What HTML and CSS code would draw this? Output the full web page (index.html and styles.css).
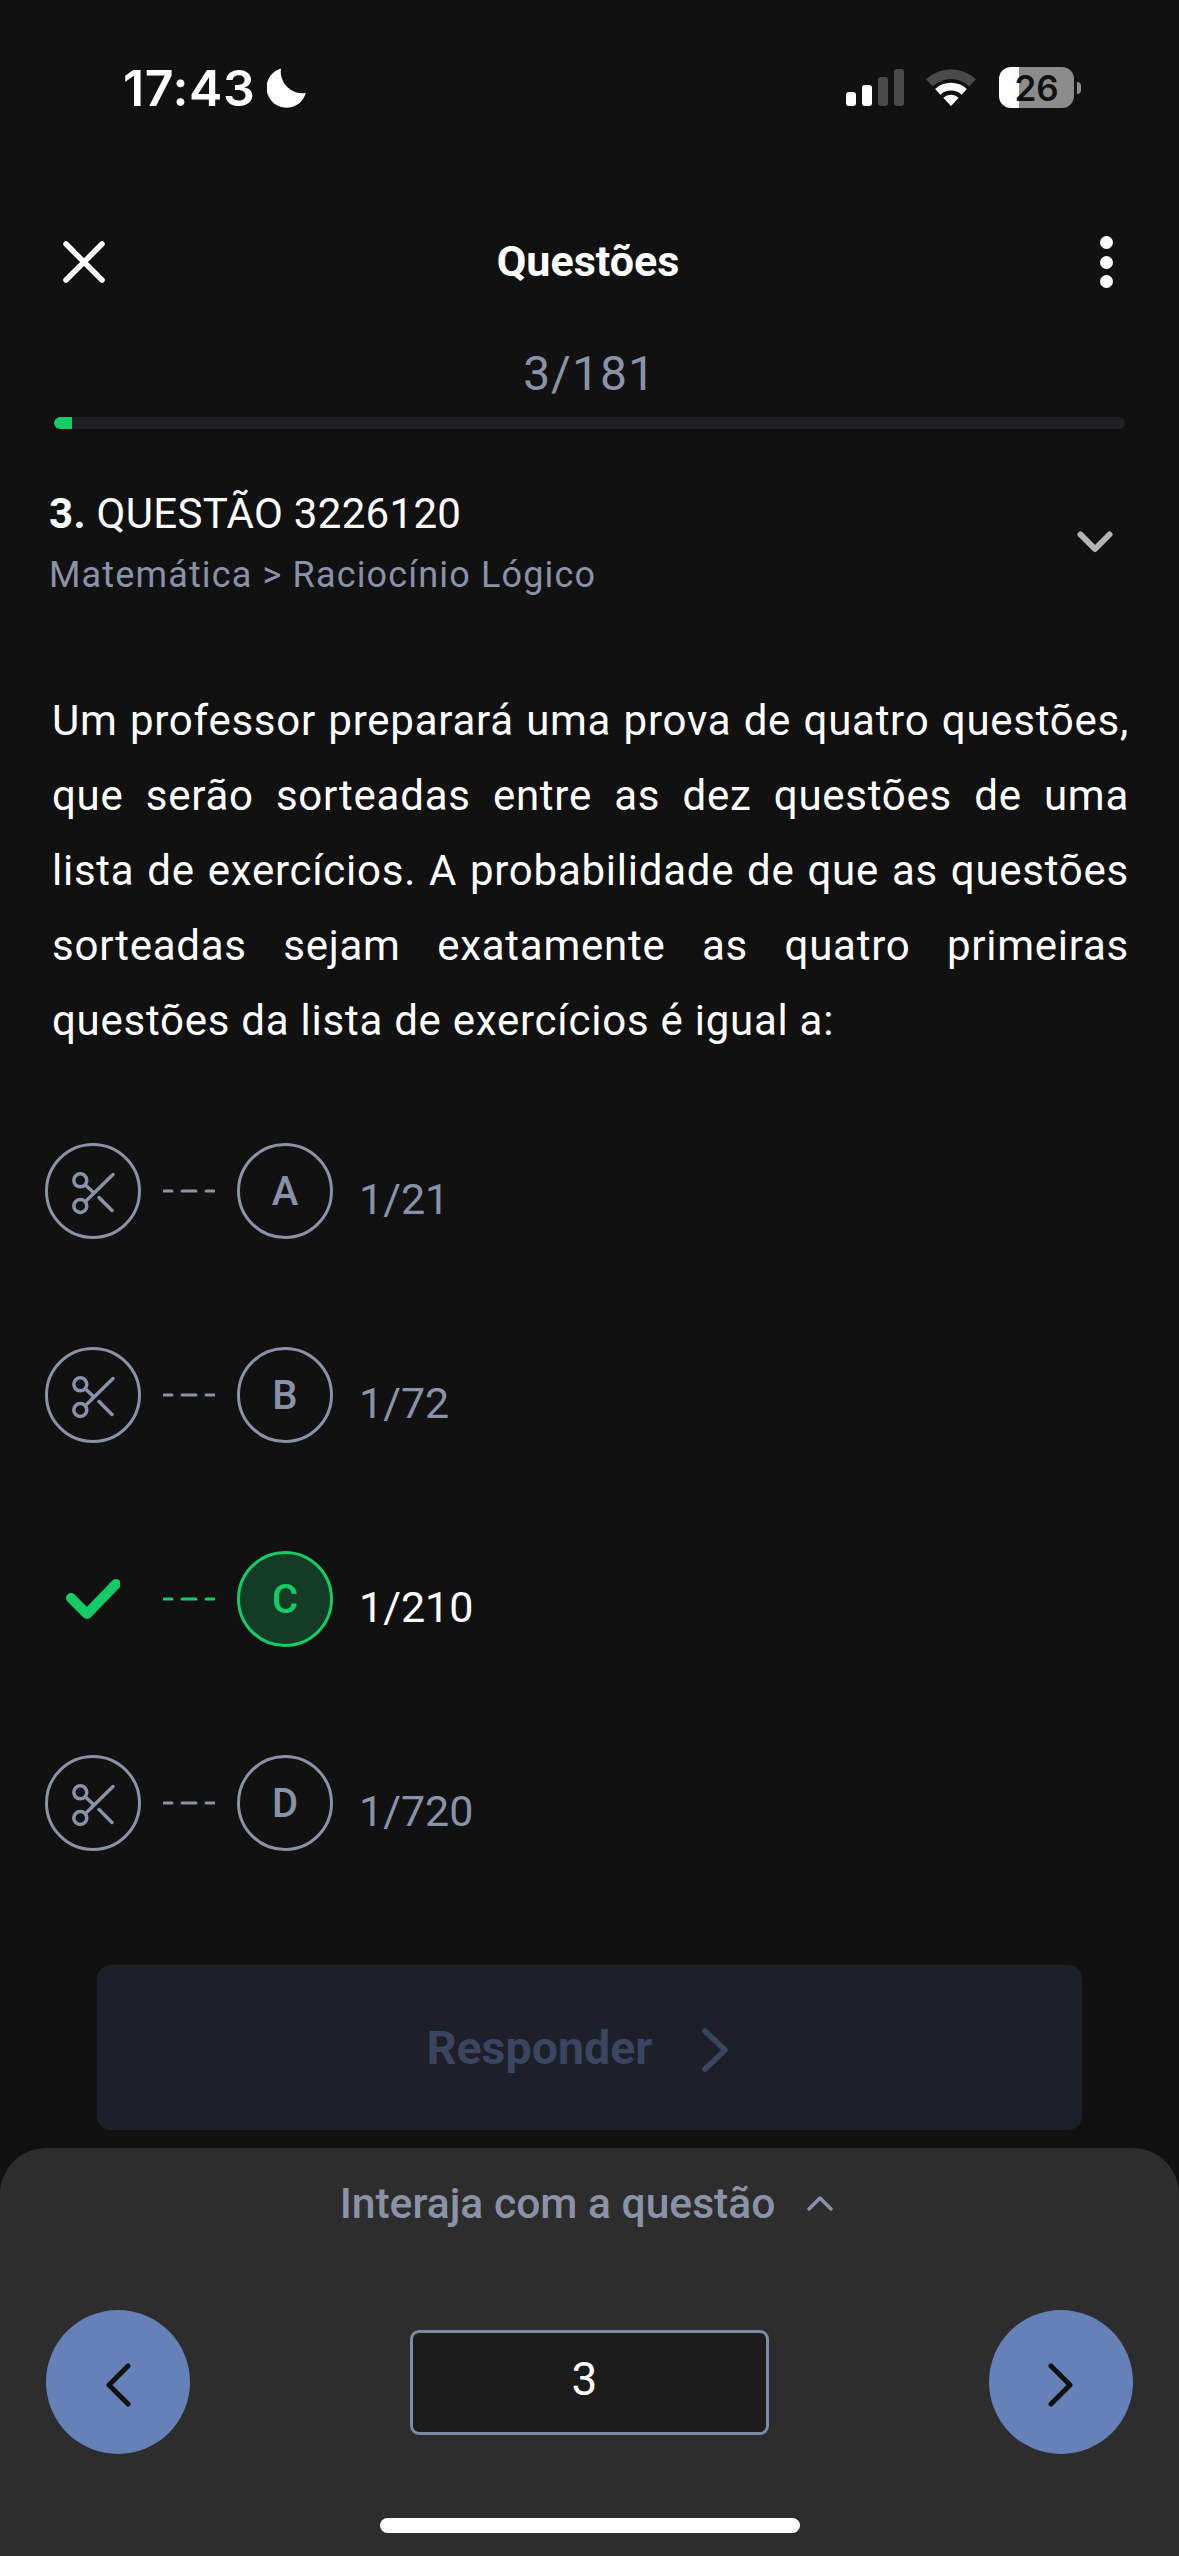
FILE: index.html
```html
<!DOCTYPE html>
<html lang="pt-BR">
<head>
<meta charset="utf-8">
<title>Questões</title>
<link rel="stylesheet" href="styles.css">
</head>
<body>
<div class="page">
  <div class="status">
    <div class="status-left">
      <span class="time">17:43</span>
      <svg class="moon" viewBox="0 0 40 40"><path d="M14 .5A20 20 0 1 0 38.8 25A21.500 21.500 0 0 1 14 .5Z" fill="#fff"/></svg>
    </div>
    <div class="status-right">
      <div class="signal"><i class="b1"></i><i class="b2"></i><i class="b3"></i><i class="b4"></i></div>
      <svg class="wifi" viewBox="0 0 50 37">
        <path d="M0 10.200A36.700 36.700 0 0 1 50 10.200L43.400 17.300A27 27 0 0 0 6.600 17.300Z" fill="#4a4a4a"/>
        <path d="M9.100 20A23.300 23.300 0 0 1 40.900 20L35.600 25.700A15.500 15.500 0 0 0 14.400 25.700Z" fill="#fff"/>
        <path d="M17.300 28.700A11.300 11.300 0 0 1 32.700 28.700L25 37Z" fill="#fff"/>
      </svg>
      <div class="battery"><span>26</span></div>
      <div class="nub"></div>
    </div>
  </div>

  <header class="topbar">
    <svg class="icon-close" viewBox="0 0 42 42"><path d="M3 3L39 39M39 3L3 39" stroke="#fff" stroke-width="5.500" stroke-linecap="round"/></svg>
    <h1 class="title">Questões</h1>
    <div class="dots"><i></i><i></i><i></i></div>
  </header>

  <div class="counter">3/181</div>
  <div class="progress"><div class="progress-fill" style="width:18px"></div></div>

  <section class="qhead">
    <div>
      <div class="qname"><b>3.</b> QUESTÃO 3226120</div>
      <div class="qsub">Matemática &gt; Raciocínio Lógico</div>
    </div>
    <svg class="qchev" viewBox="0 0 36 22"><path d="M3.500 3.500L18 18L32.500 3.500" fill="none" stroke="#b4b4b4" stroke-width="6" stroke-linecap="round" stroke-linejoin="round"/></svg>
  </section>

  <p class="statement">Um professor preparará uma prova de quatro questões, que serão sorteadas entre as dez questões de uma lista de exercícios. A probabilidade de que as questões sorteadas sejam exatamente as quatro primeiras questões da lista de exercícios é igual a:</p>

  <div class="options">
    <div class="option">
      <div class="cut"><svg viewBox="0 0 48 48"><use href="#scissors"/></svg></div>
      <svg class="dash" viewBox="0 0 52 4"><path d="M1 2H9M19 2H33M43 2H51" stroke="currentColor" stroke-width="3" stroke-linecap="round"/></svg>
      <div class="letter">A</div>
      <div class="answer">1/21</div>
    </div>
    <div class="option">
      <div class="cut"><svg viewBox="0 0 48 48"><use href="#scissors"/></svg></div>
      <svg class="dash" viewBox="0 0 52 4"><path d="M1 2H9M19 2H33M43 2H51" stroke="currentColor" stroke-width="3" stroke-linecap="round"/></svg>
      <div class="letter">B</div>
      <div class="answer">1/72</div>
    </div>
    <div class="option selected">
      <div class="cut"><svg class="check" viewBox="0 0 54 40"><path d="M5 19L21 35L50 5" fill="none" stroke="#14cc66" stroke-width="10" stroke-linecap="round" stroke-linejoin="round"/></svg></div>
      <svg class="dash" viewBox="0 0 52 4"><path d="M1 2H9M19 2H33M43 2H51" stroke="currentColor" stroke-width="3" stroke-linecap="round"/></svg>
      <div class="letter">C</div>
      <div class="answer">1/210</div>
    </div>
    <div class="option">
      <div class="cut"><svg viewBox="0 0 48 48"><use href="#scissors"/></svg></div>
      <svg class="dash" viewBox="0 0 52 4"><path d="M1 2H9M19 2H33M43 2H51" stroke="currentColor" stroke-width="3" stroke-linecap="round"/></svg>
      <div class="letter">D</div>
      <div class="answer">1/720</div>
    </div>
  </div>

  <div class="respond">
    <span>Responder</span>
    <svg viewBox="0 0 26 44"><path d="M3 3L23 22L3 41" fill="none" stroke="#3a4562" stroke-width="5.500" stroke-linecap="round" stroke-linejoin="round"/></svg>
  </div>

  <div class="sheet">
    <div class="sheet-title">
      <span>Interaja com a questão</span>
      <svg viewBox="0 0 26 16"><path d="M2 14L13 3L24 14" fill="none" stroke="#8a92a8" stroke-width="3.500" stroke-linecap="round" stroke-linejoin="round"/></svg>
    </div>
    <div class="pager">
      <div class="round"><svg viewBox="0 0 26 44"><path d="M23 3L4 22L23 41" fill="none" stroke="#111" stroke-width="5" stroke-linecap="round" stroke-linejoin="round"/></svg></div>
      <div class="num">3</div>
      <div class="round"><svg viewBox="0 0 26 44"><path d="M3 3L22 22L3 41" fill="none" stroke="#111" stroke-width="5" stroke-linecap="round" stroke-linejoin="round"/></svg></div>
    </div>
    <div class="home"></div>
  </div>
</div>

<svg width="0" height="0" class="defs">
  <symbol id="scissors" viewBox="0 0 48 48">
    <g fill="none" stroke="#8a92a8" stroke-width="3.500" stroke-linecap="round">
      <circle cx="11.300" cy="13.300" r="6.500"/>
      <circle cx="11.300" cy="39" r="6.500"/>
      <path d="M17 34L44 7.500"/>
      <path d="M17 18.500L24.500 25.500"/>
      <path d="M30 30.500L43 43.500"/>
    </g>
  </symbol>
</svg>
</body>
</html>
```
FILE: styles.css
```css
* { box-sizing: border-box; }
html, body { margin: 0; padding: 0; background: #111112; }
.defs { position: absolute; }
.page {
  width: 1179px;
  height: 2556px;
  overflow: hidden;
  display: flex;
  flex-direction: column;
  background: #111112;
  color: #fff;
  font-family: Roboto, "Noto Sans", sans-serif;
}

/* status bar */
.status {
  flex: none;
  height: 41px;
  margin-top: 67px;
  display: flex;
  justify-content: space-between;
  align-items: center;
  padding: 0 98px 0 123px;
}
.status-left { display: flex; align-items: center; gap: 12px; }
.time { font-family: Inter, sans-serif; font-weight: 600; font-size: 50px; line-height: 41px; padding-top: 2px; letter-spacing: .6px; }
.moon { width: 40px; height: 40px; }
.status-right { display: flex; align-items: center; }
.signal { display: flex; align-items: flex-end; gap: 6px; height: 37px; margin-right: 22px; }
.signal i { display: block; width: 10px; border-radius: 3px; background: #fff; }
.signal .b1 { height: 14px; }
.signal .b2 { height: 21px; }
.signal .b3 { height: 29px; background: #4a4a4a; }
.signal .b4 { height: 37px; background: #4a4a4a; }
.wifi { width: 50px; height: 37px; margin-right: 23px; }
.battery {
  width: 75px;
  height: 41px;
  border-radius: 12px;
  background: linear-gradient(90deg, #fff 20px, #8c8c8c 20px);
  display: flex;
  align-items: center;
  justify-content: center;
  color: #111;
  font-family: Inter, sans-serif;
  font-weight: 600;
  font-size: 35px;
}
.nub { width: 4px; height: 12px; margin-left: 3px; background: #8c8c8c; border-radius: 0 6px 6px 0; }

/* header */
.topbar {
  flex: none;
  display: grid;
  grid-template-columns: 1fr auto 1fr;
  align-items: center;
  height: 48px;
  margin-top: 128px;
  padding: 0 66px 0 63px;
}
.icon-close { width: 42px; height: 42px; }
.title { margin: -3px 0 0; font-size: 43px; font-weight: 700; line-height: 48px; }
.dots { display: flex; flex-direction: column; gap: 6.500px; width: 13px; justify-self: end; }
.dots i { display: block; width: 13px; height: 13px; border-radius: 50%; background: #fff; }

.counter {
  flex: none;
  margin-top: 62px;
  text-align: center;
  font-size: 48px;
  line-height: 56px;
  color: #8a92a8;
  letter-spacing: 1px;
}
.progress {
  flex: none;
  margin: 15px 54px 0;
  height: 12px;
  border-radius: 6px;
  background: #1e2024;
  overflow: hidden;
}
.progress-fill { height: 100%; background: #14cc66; border-radius: 6px 0 0 6px; }

/* question head */
.qhead {
  flex: none;
  display: flex;
  align-items: center;
  justify-content: space-between;
  margin-top: 57px;
  padding: 0 66px 0 49px;
}
.qname { font-size: 42px; line-height: 56px; color: #fff; letter-spacing: .3px; }
.qname b { font-weight: 700; }
.qsub { font-size: 36px; line-height: 46px; margin-top: 10px; color: #8a92a8; letter-spacing: 1.150px; }
.qchev { width: 36px; height: 22px; }

.statement {
  flex: none;
  margin: 85px 50px 0 52px;
  font-size: 42px;
  line-height: 75px;
  text-align: justify;
  color: #fff;
  letter-spacing: .75px;
}

/* options */
.options { flex: none; margin-top: 85px; padding-left: 45px; display: flex; flex-direction: column; gap: 108px; }
.option { display: flex; align-items: center; height: 96px; color: #8a92a8; }
.cut {
  width: 96px;
  height: 96px;
  border: 3px solid #8a92a8;
  border-radius: 50%;
  display: flex;
  align-items: center;
  justify-content: center;
  flex: none;
}
.cut svg { width: 48px; height: 48px; }
.dash { width: 52px; height: 4px; margin: 0 22px; flex: none; }
.letter {
  width: 96px;
  height: 96px;
  border: 3px solid #8a92a8;
  border-radius: 50%;
  display: flex;
  align-items: center;
  justify-content: center;
  font-size: 40px;
  font-weight: 500;
  flex: none;
}
.answer { margin: 16px 0 0 26px; font-size: 43px; line-height: 52px; }
.selected { color: #14cc66; }
.selected .cut { border-color: transparent; }
.selected .cut svg.check { width: 54px; height: 40px; }
.selected .letter { border-color: #14cc66; background: #143b26; }
.selected .answer { color: #fff; }

/* respond */
.respond {
  flex: none;
  margin: 114px 97px 0;
  height: 165px;
  background: #1d2028;
  border-radius: 14px;
  display: flex;
  align-items: center;
  justify-content: center;
  gap: 50px;
  padding-right: 24px;
  color: #3a4562;
  font-size: 46.500px;
  font-weight: 700;
}
.respond svg { width: 26px; height: 44px; margin-top: 4px; }

/* sheet */
.sheet {
  flex: 1;
  margin-top: 18px;
  background: #2d2d2d;
  border-radius: 46px 46px 0 0;
  display: flex;
  flex-direction: column;
  align-items: center;
}
.sheet-title {
  margin-top: 30px;
  display: flex;
  align-items: center;
  gap: 32px;
  font-size: 42.600px;
  line-height: 50px;
  font-weight: 500;
  color: #8a92a8;
  padding-right: 6px;
}
.sheet-title svg { width: 26px; height: 16px; }
.pager {
  width: 100%;
  display: flex;
  justify-content: space-between;
  align-items: center;
  padding: 0 46px;
  margin-top: 82px;
}
.round {
  width: 144px;
  height: 144px;
  border-radius: 50%;
  background: #6680b8;
  display: flex;
  align-items: center;
  justify-content: center;
}
.round svg { width: 26px; height: 44px; margin-top: 6px; }
.num {
  width: 359px;
  height: 105px;
  background: #1c1c1c;
  border: 3px solid #7d8aa3;
  border-radius: 9px;
  display: flex;
  align-items: center;
  justify-content: center;
  font-size: 46px;
  color: #fff;
  padding: 0 10px 6px 0;
}
.home { width: 420px; height: 15px; border-radius: 8px; background: #fff; margin-top: 64px; }
```
